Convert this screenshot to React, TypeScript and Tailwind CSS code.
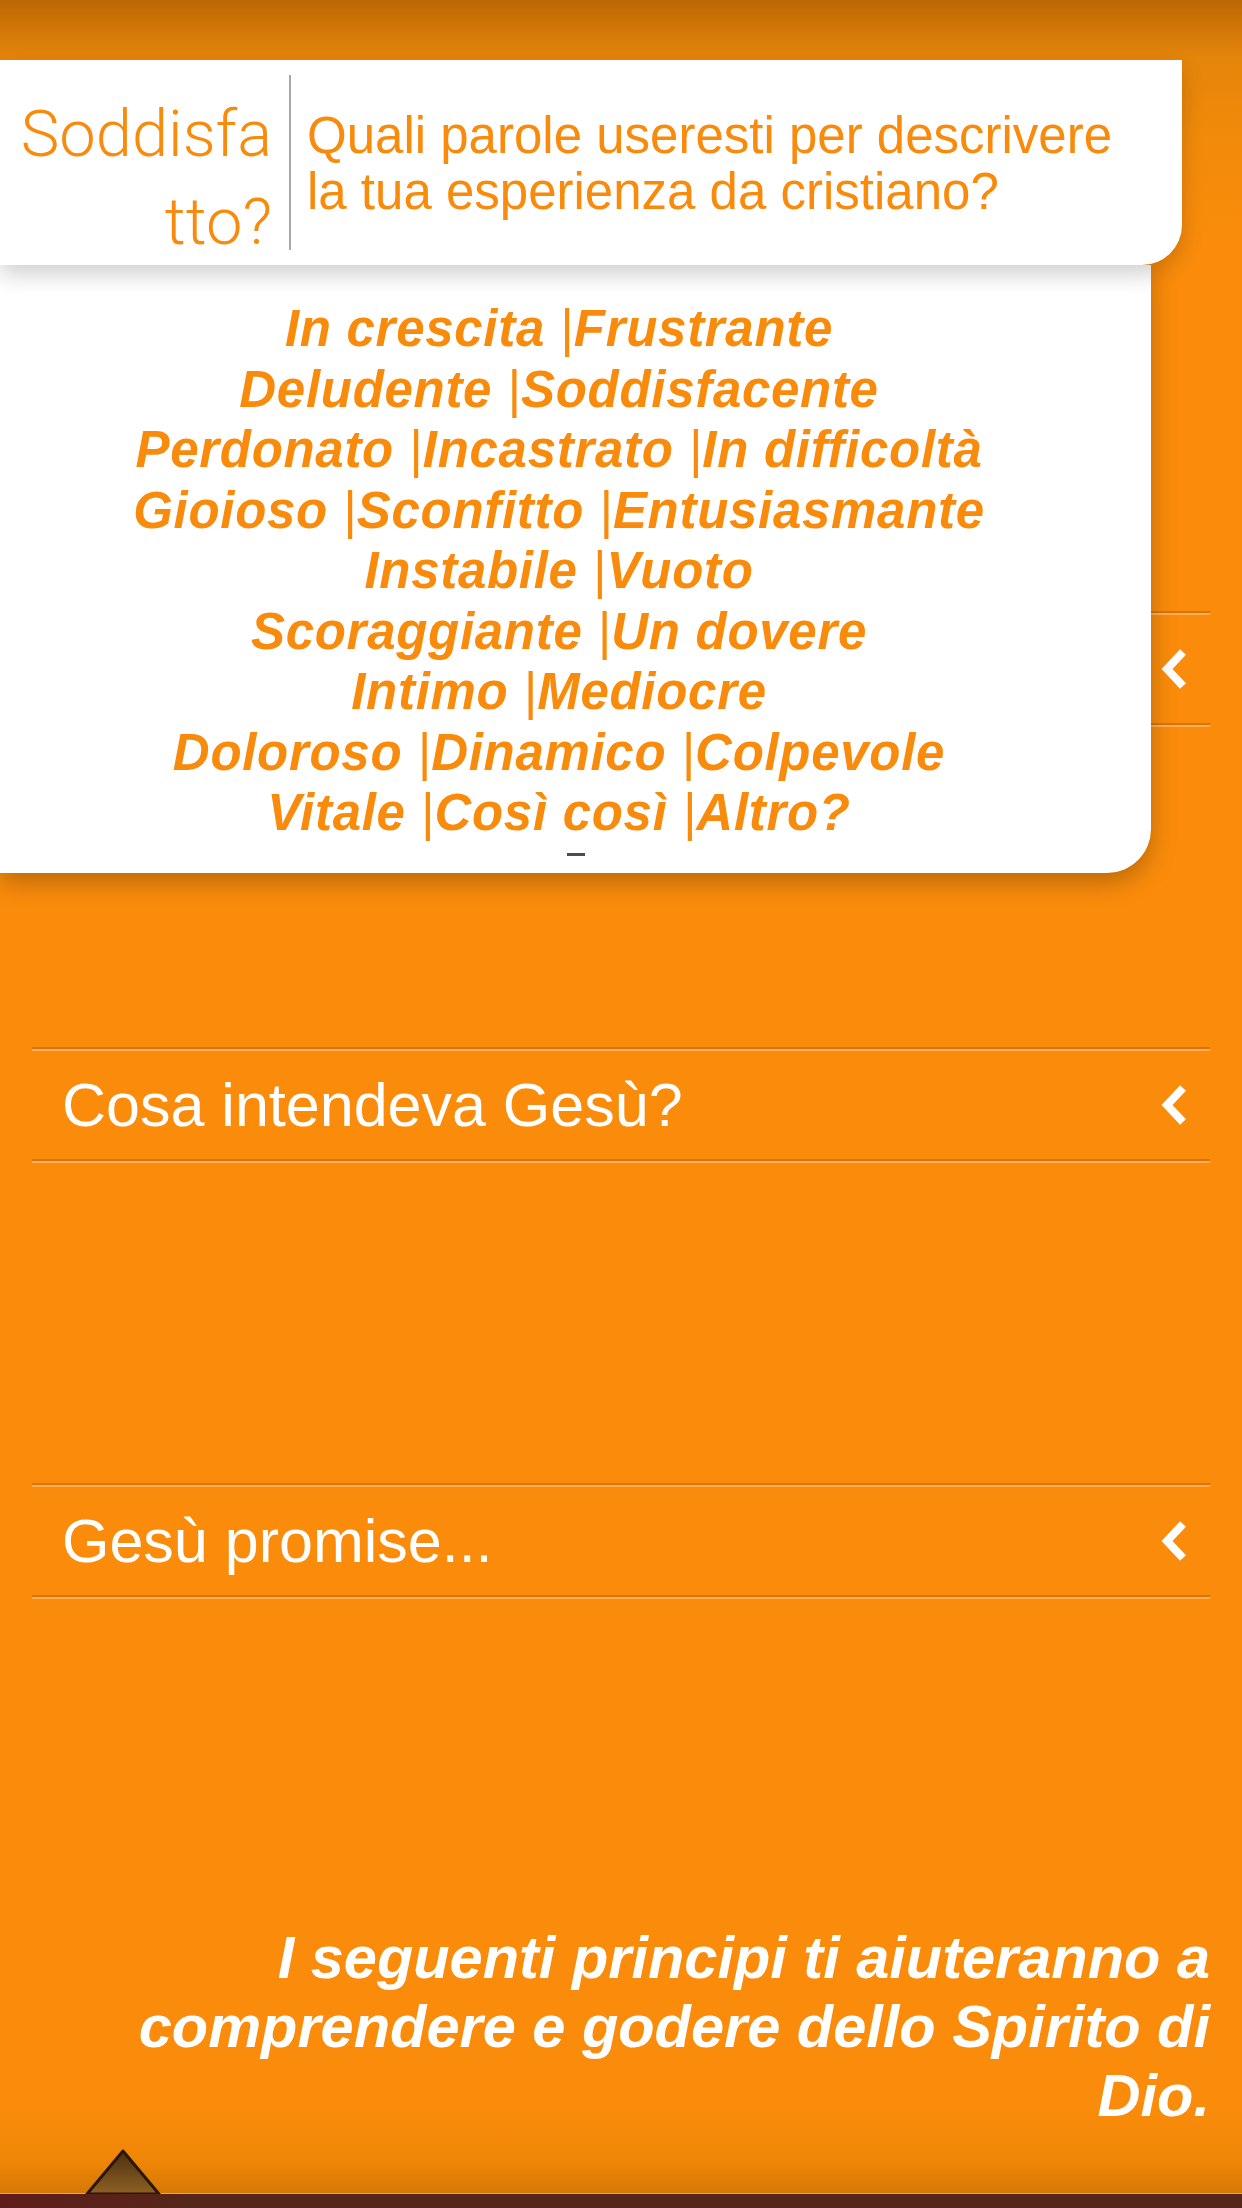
import React from "react";

const lines: string[][] = [
  ["In crescita", "Frustrante"],
  ["Deludente", "Soddisfacente"],
  ["Perdonato", "Incastrato", "In difficoltà"],
  ["Gioioso", "Sconfitto", "Entusiasmante"],
  ["Instabile", "Vuoto"],
  ["Scoraggiante", "Un dovere"],
  ["Intimo", "Mediocre"],
  ["Doloroso", "Dinamico", "Colpevole"],
  ["Vitale", "Così così", "Altro?"],
];

function Chevron() {
  return (
    <svg width="28" height="40" viewBox="0 0 28 40" className="shrink-0">
      <polyline
        points="23,3 7,20 23,37"
        fill="none"
        stroke="#ffffff"
        strokeWidth="8"
        strokeLinejoin="miter"
        strokeLinecap="butt"
      />
    </svg>
  );
}

function Rule() {
  return (
    <div className="h-[4px] w-full bg-[linear-gradient(180deg,#d67307_0%,#d67307_50%,#fdb25e_50%,#fdb25e_100%)] opacity-90" />
  );
}

function Row({ title }: { title?: string }) {
  return (
    <div className="flex h-[116px] flex-col">
      <Rule />
      <div className="flex flex-1 items-center justify-between pl-[30px] pr-[22px]">
        <span className="text-[61px] leading-none text-white">{title}</span>
        <Chevron />
      </div>
      <Rule />
    </div>
  );
}

export default function App() {
  return (
    <div
      className="relative flex h-[2208px] w-[1242px] flex-col overflow-hidden bg-[linear-gradient(180deg,#bd6705_0px,#e5850a_58px,#f28a0a_140px,#fb8c0b_260px,#fb8c0b_2105px,#f08607_2160px,#d77805_2192px)]"
      style={{ fontFamily: '"Liberation Sans", Arial, sans-serif' }}
    >
      {/* top bar area */}
      <div className="h-[60px] shrink-0" />

      {/* accordion list (first row sits under the popup) */}
      <div className="mx-[32px] flex flex-col gap-[320px] pt-[551px]">
        <Row />
        <Row title="Cosa intendeva Gesù?" />
        <Row title="Gesù promise..." />
      </div>

      <p className="mt-[324px] pr-[32px] text-right text-[59.5px] font-bold italic leading-[69px] text-white">
        I seguenti principi ti aiuteranno a
        <br />
        comprendere e godere dello Spirito di
        <br />
        Dio.
      </p>

      <div className="flex-1" />

      {/* footer bar */}
      <div className="relative h-[15px] shrink-0 border-t border-[#f6a43a] bg-[linear-gradient(90deg,#5e1d1c_0%,#55261a_15%,#55261a_100%)]">
        <svg
          width="80"
          height="46"
          viewBox="0 0 80 46"
          className="absolute bottom-full left-[83px]"
        >
          <defs>
            <linearGradient id="tri" x1="0" y1="0" x2="0" y2="1">
              <stop offset="0" stopColor="#4a3010" />
              <stop offset="1" stopColor="#8f6124" />
            </linearGradient>
          </defs>
          <polygon
            points="40,3 76,46 4,46"
            fill="url(#tri)"
            stroke="#2a1704"
            strokeWidth="3"
            strokeLinejoin="round"
          />
        </svg>
      </div>

      {/* popup */}
      <div className="absolute left-0 top-[60px] z-10 flex flex-col">
        <div className="relative z-20 flex h-[205px] w-[1182px] rounded-br-[40px] bg-white py-[15px] shadow-[0_10px_22px_rgba(0,0,0,0.18)]">
          <div
            className="w-[289px] shrink-0 pr-[17px] pt-[15px] text-right text-[65px] font-light leading-[88px] text-[#f98b0c]"
            style={{ fontFamily: 'Roboto, "Liberation Sans", sans-serif' }}
          >
            Soddisfa
            <br />
            tto?
          </div>
          <div className="w-[2px] shrink-0 bg-[#a8a8a8]" />
          <div className="pl-[16px] pt-[33px] text-[51px] leading-[56px] text-[#f98b0c]">
            Quali parole useresti per descrivere
            <br />
            la tua esperienza da cristiano?
          </div>
        </div>
        <div className="relative z-10 h-[608px] w-[1151px] rounded-br-[44px] bg-white shadow-[0_10px_26px_rgba(0,0,0,0.25)]">
          <div className="pr-[33px] pt-[34px] text-center text-[51px] font-bold italic leading-[60.5px] tracking-[0.7px] text-[#f98b0c]">
            {lines.map((items, i) => (
              <div key={i}>
                {items.map((w, j) => (
                  <React.Fragment key={j}>
                    {j > 0 && <span className="font-normal"> |</span>}
                    {w}
                  </React.Fragment>
                ))}
              </div>
            ))}
          </div>
          <div className="absolute bottom-[17px] left-[567px] h-[3px] w-[18px] bg-[#4d4d4d]" />
        </div>
      </div>
    </div>
  );
}
